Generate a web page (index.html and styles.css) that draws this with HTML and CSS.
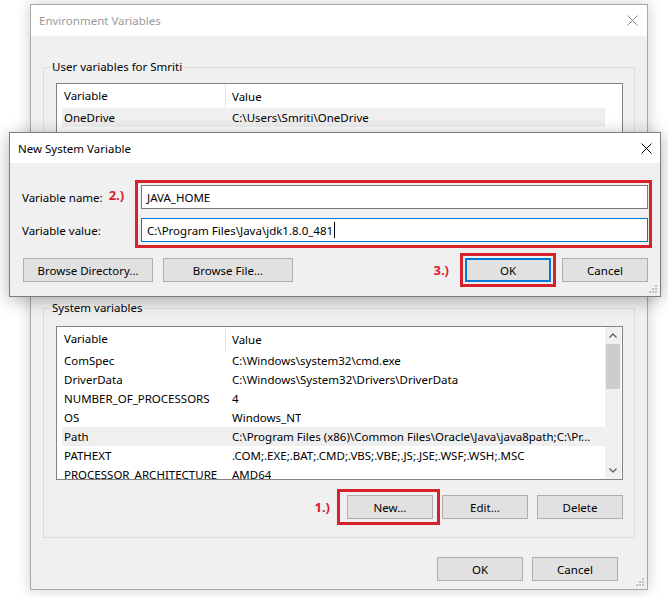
FILE: index.html
```html
<!DOCTYPE html>
<html lang="en">
<head>
    <meta charset="UTF-8">
    <meta name="viewport" content="width=device-width, initial-scale=1.0">
    <link rel="stylesheet" href="styles.css">
    <title>Environment Variables</title>
</head>
<body>
    <div class="desktop">
        <div class="window env">
            <div class="titlebar">
                <span class="title">Environment Variables</span>
                <svg class="close" width="11" height="11" viewBox="0 0 11 11"><path d="M0.5 0.5 L10.5 10.5 M10.5 0.5 L0.5 10.5" stroke="currentColor" stroke-width="1" fill="none"/></svg>
            </div>
            <div class="env-body">
                <fieldset class="group group-user">
                    <legend>User variables for Smriti</legend>
                    <div class="list list-user">
                        <div class="list-rows">
                            <div class="list-head"><span class="col-var">Variable</span><span class="col-val">Value</span></div>
                            <div class="row selected"><span class="col-var">OneDrive</span><span class="col-val">C:\Users\Smriti\OneDrive</span></div>
                        </div>
                        <div class="scroll-space"></div>
                    </div>
                    <div class="group-buttons">
                        <button class="btn">New...</button>
                        <button class="btn">Edit...</button>
                        <button class="btn">Delete</button>
                    </div>
                </fieldset>

                <fieldset class="group group-system">
                    <legend>System variables</legend>
                    <div class="list list-system">
                        <div class="list-rows">
                            <div class="list-head"><span class="col-var">Variable</span><span class="col-val">Value</span></div>
                            <div class="row"><span class="col-var">ComSpec</span><span class="col-val">C:\Windows\system32\cmd.exe</span></div>
                            <div class="row"><span class="col-var">DriverData</span><span class="col-val">C:\Windows\System32\Drivers\DriverData</span></div>
                            <div class="row"><span class="col-var">NUMBER_OF_PROCESSORS</span><span class="col-val">4</span></div>
                            <div class="row"><span class="col-var">OS</span><span class="col-val">Windows_NT</span></div>
                            <div class="row selected"><span class="col-var">Path</span><span class="col-val">C:\Program Files (x86)\Common Files\Oracle\Java\java8path;C:\Pr...</span></div>
                            <div class="row"><span class="col-var">PATHEXT</span><span class="col-val">.COM;.EXE;.BAT;.CMD;.VBS;.VBE;.JS;.JSE;.WSF;.WSH;.MSC</span></div>
                            <div class="row"><span class="col-var">PROCESSOR_ARCHITECTURE</span><span class="col-val">AMD64</span></div>
                        </div>
                        <div class="scrollbar">
                            <div class="arrow"><svg width="8" height="5" viewBox="0 0 8 5"><path d="M0.5 4.5 L4 1 L7.5 4.5" stroke="#606060" stroke-width="1.3" fill="none"/></svg></div>
                            <div class="track"><div class="thumb"></div></div>
                            <div class="arrow"><svg width="8" height="5" viewBox="0 0 8 5"><path d="M0.5 0.5 L4 4 L7.5 0.5" stroke="#606060" stroke-width="1.3" fill="none"/></svg></div>
                        </div>
                    </div>
                    <div class="group-buttons">
                        <span class="mark">1.)</span>
                        <div class="redbox">
                            <button class="btn">New...</button>
                        </div>
                        <button class="btn">Edit...</button>
                        <button class="btn">Delete</button>
                    </div>
                </fieldset>

                <div class="dialog-buttons">
                    <button class="btn">OK</button>
                    <button class="btn">Cancel</button>
                </div>
            </div>
            <svg class="grip" width="8" height="8" viewBox="0 0 8 8"><path d="M6 0h2v2h-2zM6 3h2v2h-2zM3 3h2v2h-2zM6 6h2v2h-2zM3 6h2v2h-2zM0 6h2v2h-2z" fill="#c2c2c2"/></svg>
        </div>

        <div class="window newvar">
            <div class="titlebar">
                <span class="title">New System Variable</span>
                <svg class="close" width="11" height="11" viewBox="0 0 11 11"><path d="M0.5 0.5 L10.5 10.5 M10.5 0.5 L0.5 10.5" stroke="currentColor" stroke-width="1" fill="none"/></svg>
            </div>
            <div class="nv-body">
                <div class="nv-fields">
                    <div class="nv-labels">
                        <div class="nv-label">Variable name: <span class="mark">2.)</span></div>
                        <div class="nv-label">Variable value:</div>
                    </div>
                    <div class="redbox nv-inputs">
                        <div class="input">JAVA_HOME</div>
                        <div class="input focused">C:\Program Files\Java\jdk1.8.0_481<span class="caret"></span></div>
                    </div>
                </div>
                <div class="nv-buttons">
                    <button class="btn btn-wide">Browse Directory...</button>
                    <button class="btn btn-wide">Browse File...</button>
                    <span class="spacer"></span>
                    <span class="mark">3.)</span>
                    <div class="redbox">
                        <button class="btn btn-default">OK</button>
                    </div>
                    <button class="btn btn-cancel">Cancel</button>
                </div>
            </div>
            <svg class="grip" width="8" height="8" viewBox="0 0 8 8"><path d="M6 0h2v2h-2zM6 3h2v2h-2zM3 3h2v2h-2zM6 6h2v2h-2zM3 6h2v2h-2zM0 6h2v2h-2z" fill="#c2c2c2"/></svg>
        </div>
    </div>
</body>
</html>
```

FILE: styles.css
```css
body {
    margin: 0;
    background: #fff;
    font-family: "Noto Sans", "Open Sans", sans-serif;
    font-size: 11.5px;
    color: #000;
}

.desktop {
    position: relative;
    width: 668px;
    height: 597px;
    overflow: hidden;
}

/* windows on the desktop */
.window {
    position: absolute;
    box-sizing: border-box;
    background: #f0f0f0;
    display: flex;
    flex-direction: column;
}

.env {
    left: 30px;
    top: 4px;
    width: 618px;
    height: 586px;
    border: 1px solid #a8a8a8;
    box-shadow: 0 0 14px rgba(0, 0, 0, 0.2);
}

.newvar {
    left: 9px;
    top: 132px;
    width: 652px;
    height: 165px;
    border: 1px solid #7c7c7c;
    box-shadow: 0 3px 16px rgba(0, 0, 0, 0.3);
}

.titlebar {
    background: #fff;
    display: flex;
    align-items: center;
    justify-content: space-between;
    flex-shrink: 0;
}

.env .titlebar {
    height: 31px;
    padding: 0 9px 0 8px;
    color: #9a9a9a;
}

.newvar .titlebar {
    height: 30px;
    padding: 0 8px 0 8px;
    color: #000;
}

.close {
    display: block;
}

.env .close {
    color: #8a8a8a;
}

.grip {
    position: absolute;
    right: 3px;
    bottom: 3px;
}

/* environment variables body */
.env-body {
    padding: 23px 12px 0 12px;
}

.group {
    margin: 0;
    border: 1px solid #dcdcdc;
    padding: 8px 11px 12px 12px;
}

.group legend {
    padding: 0 2px;
    margin-left: -6px;
    line-height: 16px;
}

.group-user {
    padding-bottom: 13px;
}

.group-system {
    margin-top: 40px;
    padding-top: 10px;
}

.list {
    box-sizing: border-box;
    border: 1px solid #828282;
    background: #fff;
    display: flex;
    overflow: hidden;
}

.list-user {
    height: 130px;
}

.list-system {
    height: 154px;
}

.list-rows {
    flex: 1;
    padding-left: 5px;
    overflow: hidden;
}

.list-head,
.row {
    display: flex;
    white-space: nowrap;
}

.list-head {
    height: 24px;
    align-items: center;
}

.list-head .col-var {
    border-right: 1px solid #e5e5e5;
    height: 24px;
    line-height: 24px;
}

.row {
    height: 19px;
    line-height: 19px;
}

.row.selected {
    background: #efefef;
}

.col-var {
    box-sizing: border-box;
    width: 164px;
    padding-left: 2px;
    flex-shrink: 0;
}

.col-val {
    padding-left: 6px;
    overflow: hidden;
}

.scroll-space {
    width: 17px;
}

.scrollbar {
    width: 16px;
    margin-right: 1px;
    background: #f0f0f0;
    display: flex;
    flex-direction: column;
}

.arrow {
    height: 17px;
    display: flex;
    align-items: center;
    justify-content: center;
}

.track {
    flex: 1;
}

.thumb {
    height: 45px;
    margin: 0 1px;
    background: #cdcdcd;
}

.group-buttons {
    margin-top: 9px;
    display: flex;
    justify-content: flex-end;
    align-items: center;
    gap: 9px;
}

.group-system .group-buttons .redbox {
    margin-right: -7px;
    padding: 3px 4px 3px 7px;
}

.dialog-buttons {
    margin-top: 19px;
    margin-right: 17px;
    display: flex;
    justify-content: flex-end;
    gap: 9px;
}

/* buttons */
.btn {
    box-sizing: border-box;
    width: 86px;
    height: 24px;
    padding: 0;
    background: #e1e1e1;
    border: 1px solid #adadad;
    font-family: inherit;
    font-size: 11.5px;
    color: #000;
}

.btn-wide {
    width: 130px;
}

.btn-default {
    border-color: #0078d7;
    box-shadow: inset 0 0 0 1px #0078d7;
}

/* red annotations */
.redbox {
    border: 3px solid #d7212b;
}

.mark {
    color: #d7212b;
    font-weight: bold;
    font-size: 13px;
}

.group-system .mark {
    margin-right: -2px;
}

/* new system variable body */
.nv-body {
    padding: 17px 8px 9px 12px;
}

.nv-fields {
    display: flex;
}

.nv-labels {
    width: 113px;
    padding-top: 5px;
    display: flex;
    flex-direction: column;
    gap: 9px;
}

.nv-label {
    height: 24px;
    display: flex;
    align-items: center;
    white-space: nowrap;
}

.nv-label .mark {
    margin-left: 6px;
    margin-top: -4px;
}

.nv-inputs {
    flex: 1;
    padding: 2px 1px 3px 3px;
    display: flex;
    flex-direction: column;
    gap: 9px;
}

.input {
    box-sizing: border-box;
    height: 24px;
    padding-left: 5px;
    border: 1px solid #7a7a7a;
    background: #fff;
    display: flex;
    align-items: center;
    white-space: nowrap;
}

.input.focused {
    border-color: #0078d7;
}

.caret {
    display: inline-block;
    width: 1px;
    height: 16px;
    margin-left: 1px;
    background: #000;
}

.nv-buttons {
    margin-top: 5px;
    margin-left: 1px;
    margin-right: 4px;
    display: flex;
    align-items: center;
    gap: 10px;
}

.spacer {
    flex: 1;
}

.nv-buttons .mark {
    margin-right: 1px;
}

.nv-buttons .redbox {
    padding: 2px;
}

.btn-cancel {
    margin-left: -4px;
}
```
